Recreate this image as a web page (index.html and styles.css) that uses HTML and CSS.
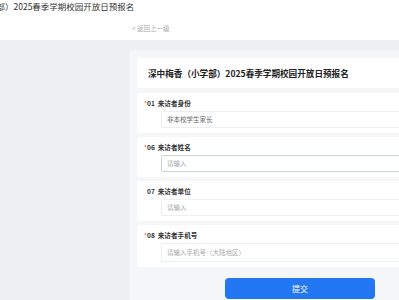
FILE: index.html
```html
<!DOCTYPE html>
<html lang="zh">
<head>
<meta charset="utf-8">
<link rel="stylesheet" href="styles.css">
</head>
<body>
<div class="top">
  <div class="page-title">深中梅香（小学部）2025春季学期校园开放日预报名</div>
  <div class="back">&lt; 返回上一级</div>
</div>
<div class="main">
  <div class="panel">
    <div class="card head">深中梅香（小学部）2025春季学期校园开放日预报名</div>
    <div class="card">
      <div class="label"><span class="req">*</span>01&nbsp; 来访者身份</div>
      <div class="input filled">非本校学生家长</div>
    </div>
    <div class="card">
      <div class="label"><span class="req">*</span>06&nbsp; 来访者姓名</div>
      <div class="input focus">请输入</div>
    </div>
    <div class="card">
      <div class="label"><span class="req none">*</span>07&nbsp; 来访者单位</div>
      <div class="input">请输入</div>
    </div>
    <div class="card">
      <div class="label"><span class="req">*</span>08&nbsp; 来访者手机号</div>
      <div class="input tall">请输入手机号（大陆地区）</div>
    </div>
    <div class="actions">
      <div class="submit">提交</div>
    </div>
  </div>
</div>
</body>
</html>
```

FILE: styles.css
```css
html, body {
  margin: 0;
  padding: 0;
  background: #eef0f2;
  font-family: "Noto Sans CJK SC", "Noto Sans", sans-serif;
  overflow: hidden;
}
.top {
  background: #ffffff;
  height: 40px;
}
.page-title {
  font-size: 8.5px;
  color: #333;
  line-height: 12px;
  margin-left: -63px;
  white-space: nowrap;
}
.back {
  font-size: 6.5px;
  color: #aaa;
  line-height: 10px;
  margin-top: 11px;
  margin-left: 132px;
}
.main {
  padding: 10px 0 0 130px;
  width: 400px;
}
.panel {
  background: #f5f6f7;
  padding: 8px 0 0 7px;
  width: 300px;
  min-height: 260px;
  display: flex;
  flex-direction: column;
  gap: 4px;
}
.card {
  background: #fff;
  border-radius: 3px;
  padding: 5px 8px 5px 7px;
  box-sizing: border-box;
}
.card.head {
  height: 30px;
  display: flex;
  align-items: center;
  padding-left: 11px;
  font-size: 8.6px;
  font-weight: bold;
  color: #222;
  white-space: nowrap;
  margin-bottom: 1px;
}
.label {
  font-size: 6.6px;
  font-weight: bold;
  color: #333;
  line-height: 10px;
  white-space: nowrap;
}
.req {
  color: #e5533d;
  display: inline-block;
  width: 3px;
  font-weight: normal;
}
.req.none {
  visibility: hidden;
}
.input {
  margin: 3px 0 0 17px;
  height: 17px;
  border: 1px solid #edeef0;
  border-radius: 2px;
  box-sizing: border-box;
  padding-left: 5px;
  font-size: 6.5px;
  line-height: 15px;
  color: #a8a8a8;
}
.input.tall {
  height: 19px;
  line-height: 17px;
}
.input.filled {
  color: #666;
}
.input.focus {
  border-color: #c9d3df;
}
.actions {
  padding: 7px 0 0 88px;
}
.submit {
  width: 150px;
  height: 21px;
  border-radius: 4px;
  background: #2377f2;
  color: #fff;
  font-size: 8px;
  line-height: 21px;
  text-align: center;
}
```
